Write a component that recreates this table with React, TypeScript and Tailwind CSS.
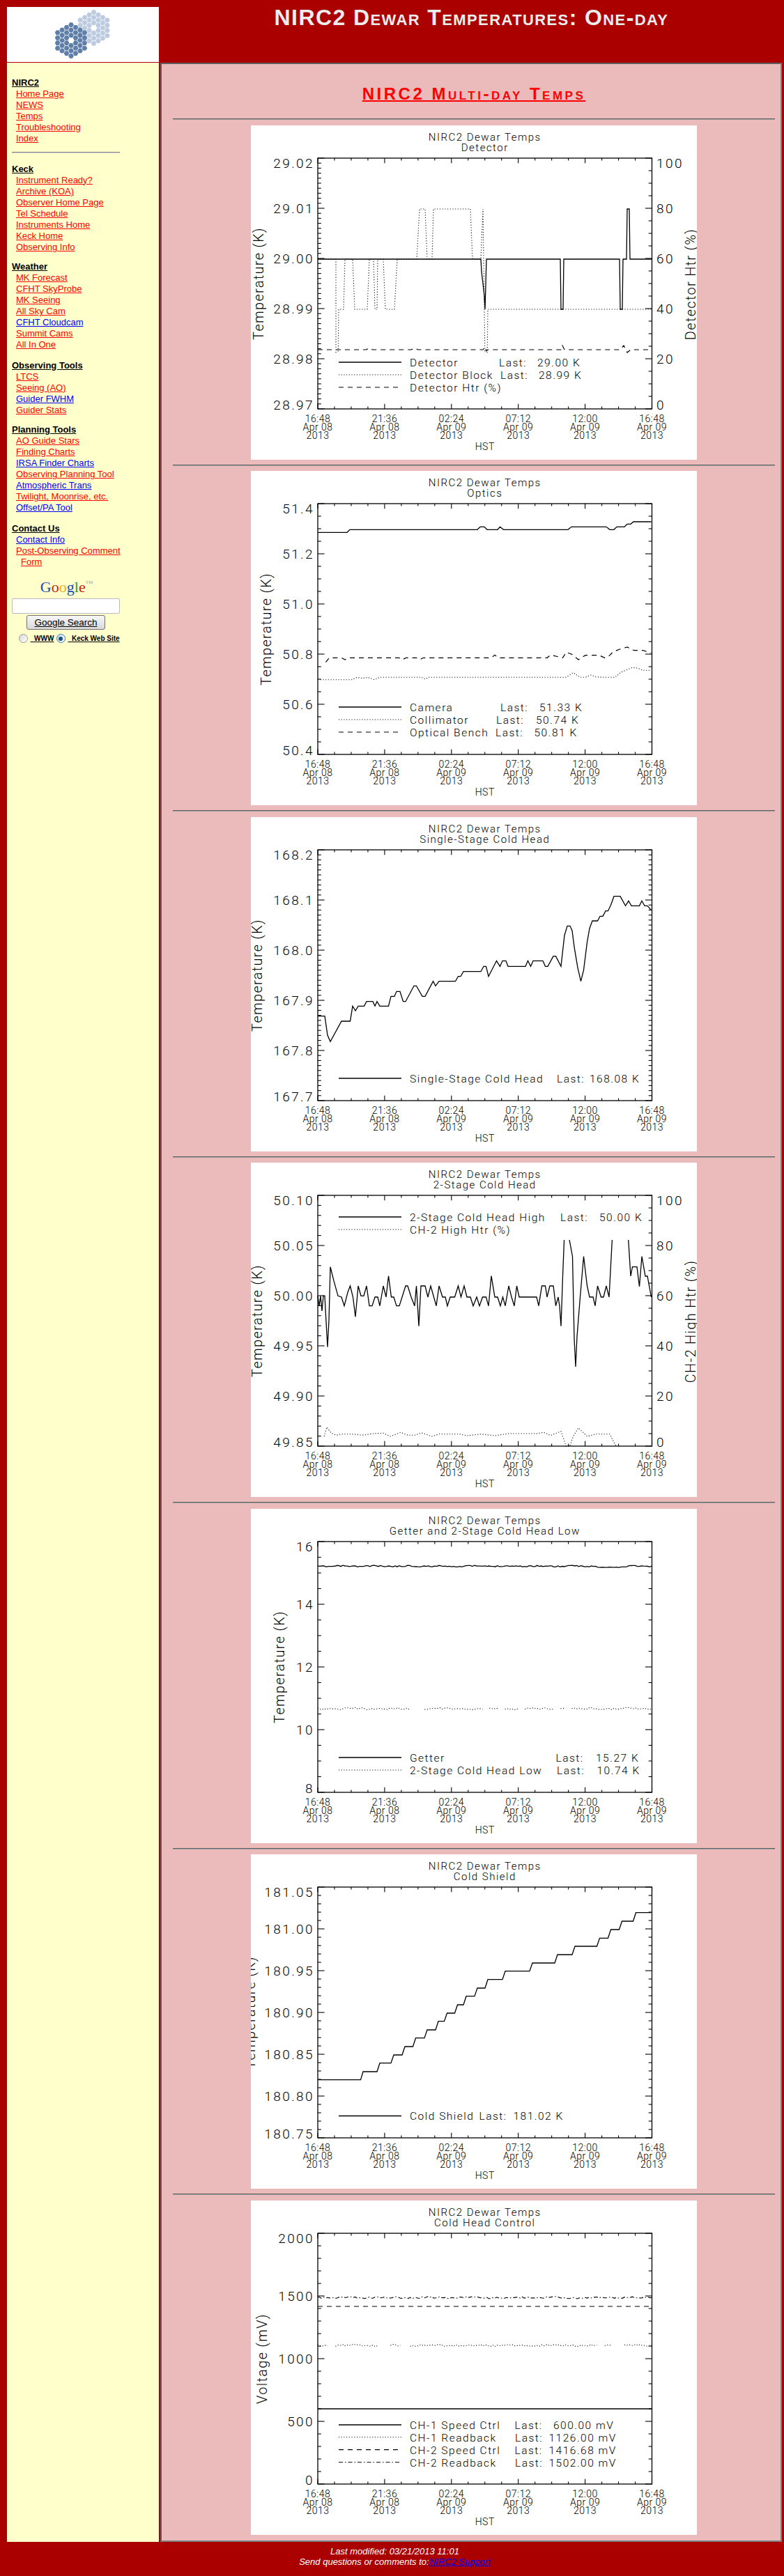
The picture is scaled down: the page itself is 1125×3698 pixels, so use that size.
import React from 'react';

type Pt = [number, number];
type LineStyle = 'solid' | 'dotted' | 'dashed' | 'dashdot';

const FONT = "Roboto, 'Liberation Sans', Arial, sans-serif";
const X0 = 96;
const X1 = 575.5;
const Y0 = 47;
const Y1 = 407;

const zx = (x: number) => (x - 232) / 2 + 96;
const zy = (y: number) => (y - 162) / 3 + 47;
const zy6 = (y: number) => (y - 160) / 3 + 47;
const Z = (arr: number[][], fy: (y: number) => number = zy): Pt[] =>
  arr.map(([x, y]) => [zx(x), fy(y)] as Pt);

function rng(seed: number) {
  let s = seed;
  return () => {
    s = (s * 16807) % 2147483647;
    return (s - 1) / 2147483646;
  };
}

function styleFor(s: LineStyle) {
  switch (s) {
    case 'dotted':
      return { strokeDasharray: '1.1 2.6', strokeWidth: 1.1 };
    case 'dashed':
      return { strokeDasharray: '7 6', strokeWidth: 1.2 };
    case 'dashdot':
      return { strokeDasharray: '6 3 1.5 3', strokeWidth: 1.1 };
    default:
      return { strokeDasharray: undefined, strokeWidth: 1.3 };
  }
}

interface LegendRow {
  style: LineStyle;
  label: string;
  lastX?: number;
  value?: string;
  valX?: number;
}

interface ChartDef {
  sub: string;
  yMin: number;
  step: number;
  nMaj: number;
  nMin: number;
  dec: number;
  yTitle: string;
  yTitleX: number;
  right?: string;
  series: { segs: Pt[][]; style: LineStyle }[];
  legend: LegendRow[];
  legendY: number[];
}

const xLabels = [
  ['16:48', 'Apr 08', '2013'],
  ['21:36', 'Apr 08', '2013'],
  ['02:24', 'Apr 09', '2013'],
  ['07:12', 'Apr 09', '2013'],
  ['12:00', 'Apr 09', '2013'],
  ['16:48', 'Apr 09', '2013'],
];

function pathOf(segs: Pt[][]) {
  return segs
    .map((seg) => 'M' + seg.map((p) => `${p[0].toFixed(1)},${p[1].toFixed(1)}`).join('L'))
    .join('');
}

function Chart({ d }: { d: ChartDef }) {
  const W = X1 - X0;
  const H = Y1 - Y0;
  const ticks: React.ReactNode[] = [];
  for (let i = 0; i <= 20; i++) {
    const x = X0 + (i * W) / 20;
    const len = i % 4 === 0 ? 7.2 : 3.6;
    ticks.push(<line key={'xb' + i} x1={x} x2={x} y1={Y1} y2={Y1 - len} />);
    ticks.push(<line key={'xt' + i} x1={x} x2={x} y1={Y0} y2={Y0 + len} />);
  }
  const nm = d.nMaj * d.nMin;
  for (let j = 0; j <= nm; j++) {
    const y = Y1 - (j * H) / nm;
    const len = j % d.nMin === 0 ? 9.6 : 4.8;
    ticks.push(<line key={'yl' + j} x1={X0} x2={X0 + len} y1={y} y2={y} />);
    if (!d.right) ticks.push(<line key={'yr' + j} x1={X1} x2={X1 - len} y1={y} y2={y} />);
  }
  if (d.right) {
    for (let j = 0; j <= 20; j++) {
      const y = Y1 - (j * H) / 20;
      const len = j % 4 === 0 ? 9.6 : 4.8;
      ticks.push(<line key={'rr' + j} x1={X1} x2={X1 - len} y1={y} y2={y} />);
    }
  }
  const texts: React.ReactNode[] = [];
  for (let i = 0; i <= d.nMaj; i++) {
    const y = Y1 - (i * H) / d.nMaj;
    const off = i === d.nMaj ? 7.5 : i === 0 ? -6 : 0;
    texts.push(
      <text key={'yv' + i} x={91} y={y + off + 6.8} fontSize={19} letterSpacing={2.4} textAnchor="end">
        {(d.yMin + i * d.step).toFixed(d.dec)}
      </text>
    );
  }
  if (d.right) {
    for (let i = 0; i <= 5; i++) {
      const y = Y1 - (i * H) / 5;
      const off = i === 5 ? 7.5 : i === 0 ? -6 : 0;
      texts.push(
        <text key={'rv' + i} x={582} y={y + off + 6.8} fontSize={19} letterSpacing={2.4}>
          {String(i * 20)}
        </text>
      );
    }
  }
  xLabels.forEach((lab, i) => {
    const x = X0 + (i * W) / 5;
    lab.forEach((t, k) => {
      texts.push(
        <text key={'xl' + i + '_' + k} x={x} y={426 + k * 12} fontSize={14} letterSpacing={0.5} textAnchor="middle">
          {t}
        </text>
      );
    });
  });
  const cx = (X0 + X1) / 2;
  const top = d.legendY[0] - 13;
  const bot = d.legendY[d.legendY.length - 1] + 15;
  return (
    <svg
      width={640}
      height={480}
      viewBox="0 0 640 480"
      className="block bg-white"
      fontFamily={FONT}
      fontWeight={300}
    >
      <rect x={0} y={0} width={640} height={480} fill="#ffffff" />
      {d.series.map((s, i) => {
        const st = styleFor(s.style);
        return (
          <path
            key={'s' + i}
            d={pathOf(s.segs)}
            fill="none"
            stroke="#000"
            strokeWidth={st.strokeWidth}
            strokeDasharray={st.strokeDasharray}
            strokeLinejoin="miter"
          />
        );
      })}
      <rect x={118} y={top} width={452} height={bot - top} fill="#ffffff" />
      <rect x={X0} y={Y0} width={W} height={H} fill="none" stroke="#000" strokeWidth={1.3} />
      <g stroke="#000" strokeWidth={1.1}>{ticks}</g>
      <g fill="#000">
        <text x={cx} y={22.4} fontSize={15} letterSpacing={1.5} textAnchor="middle">
          NIRC2 Dewar Temps
        </text>
        <text x={cx} y={37.4} fontSize={15} letterSpacing={1.5} textAnchor="middle">
          {d.sub}
        </text>
        {texts}
        <text x={cx} y={466} fontSize={14} letterSpacing={0.5} textAnchor="middle">
          HST
        </text>
        <text
          transform={`translate(${d.yTitleX},227) rotate(-90)`}
          fontSize={20}
          letterSpacing={1.3}
          textAnchor="middle"
        >
          {d.yTitle}
        </text>
        {d.right && (
          <text transform="translate(638,228) rotate(-90)" fontSize={20} letterSpacing={1.3} textAnchor="middle">
            {d.right}
          </text>
        )}
      </g>
      {d.legend.map((r, i) => {
        const y = d.legendY[i];
        const st = styleFor(r.style);
        return (
          <g key={'lg' + i}>
            <line
              x1={126}
              x2={216}
              y1={y}
              y2={y}
              stroke="#000"
              strokeWidth={st.strokeWidth}
              strokeDasharray={st.strokeDasharray}
            />
            <text x={228} y={y + 5.8} fontSize={15.5} letterSpacing={1.5}>
              {r.label}
            </text>
            {r.lastX !== undefined && (
              <text x={r.lastX} y={y + 5.8} fontSize={15.5} letterSpacing={1.5}>
                Last:
              </text>
            )}
            {r.valX !== undefined && (
              <text x={r.valX} y={y + 5.8} fontSize={15.5} letterSpacing={1.5}>
                {r.value}
              </text>
            )}
          </g>
        );
      })}
    </svg>
  );
}

/* ---------------- data ---------------- */

const c1Solid: Pt[] = [
  [96, 192], [330, 192], [331, 210], [333, 227], [335, 245], [336, 264], [338, 192],
  [444, 192], [445, 264], [448, 264], [449, 192], [529, 192], [530, 264], [533, 264],
  [534, 192], [539, 192], [540, 120], [543, 120], [544, 192], [575.5, 192],
];
const c1Dotted: Pt[] = [
  [96, 192], [122, 192], [122, 340], [125, 340], [126, 264], [133, 264], [135, 192],
  [146, 192], [149, 264], [167, 264], [170, 192], [176, 192], [178, 264], [181, 264],
  [182, 192], [190, 192], [193, 264], [206, 264], [210, 192], [238, 192], [242, 120],
  [250, 120], [253, 192], [260, 192], [262, 120], [315, 120], [318, 192], [330, 192],
  [333, 120], [335, 264], [336, 340], [339, 340], [340, 264], [575.5, 264],
];
const c1Dashed: Pt[] = [
  [96, 322], [165, 322], [170, 320], [175, 322], [230, 322], [235, 320], [240, 322],
  [333, 322], [336, 318], [338, 324], [340, 322], [445, 322], [447, 316], [450, 322],
  [530, 322], [535, 316], [540, 326], [545, 322], [575.5, 322],
];

const c2Camera = Z([
  [232, 286], [316, 286], [324, 274], [690, 274], [698, 262], [710, 262], [718, 274],
  [748, 274], [755, 262], [765, 274], [950, 274], [960, 262], [1060, 262], [1070, 274],
  [1082, 274], [1090, 262], [1112, 262], [1120, 250], [1130, 250], [1138, 240], [1189, 240],
]);
const c2Coll = Z([
  [232, 920], [330, 920], [345, 910], [360, 914], [375, 910], [395, 920], [410, 910],
  [530, 910], [540, 918], [550, 910], [945, 910], [965, 890], [985, 910], [1000, 910],
  [1015, 900], [1030, 908], [1050, 910], [1085, 910], [1100, 890], [1115, 880], [1135, 868],
  [1150, 870], [1165, 880], [1189, 880],
]);
const c2Bench = Z([
  [255, 845], [265, 826], [300, 826], [310, 834], [320, 826], [465, 826], [475, 834],
  [485, 826], [515, 826], [525, 834], [535, 826], [730, 826], [740, 814], [750, 826],
  [890, 826], [900, 814], [935, 826], [945, 802], [960, 810], [980, 834], [1000, 815],
  [1040, 815], [1055, 826], [1065, 822], [1080, 800], [1100, 788], [1120, 780], [1140, 794],
  [1165, 794], [1189, 805],
]);

const c3 = Z([
  [232, 878], [252, 878], [260, 960], [268, 988], [300, 900], [325, 900], [332, 835],
  [340, 855], [348, 835], [365, 835], [372, 815], [390, 815], [396, 835], [402, 815],
  [410, 835], [435, 835], [442, 793], [452, 793], [458, 772], [468, 772], [477, 815],
  [484, 815], [508, 748], [515, 748], [532, 793], [540, 793], [563, 728], [570, 748],
  [580, 728], [627, 728], [635, 707], [642, 707], [650, 686], [700, 686], [708, 664],
  [715, 664], [722, 707], [745, 640], [755, 664], [762, 640], [772, 640], [778, 664],
  [828, 664], [835, 640], [843, 664], [850, 640], [878, 640], [885, 664], [892, 664],
  [908, 620], [915, 620], [930, 664], [940, 530], [948, 490], [956, 490], [962, 510],
  [968, 580], [978, 670], [987, 728], [995, 680], [1005, 560], [1012, 500], [1020, 468],
  [1035, 468], [1042, 448], [1050, 448], [1058, 425], [1065, 425], [1073, 400], [1082, 362],
  [1100, 362], [1115, 403], [1124, 382], [1132, 403], [1155, 403], [1162, 382], [1170, 403],
  [1178, 403], [1189, 422],
]);

const c4Solid = Z([
  [232, 595], [236, 638], [240, 595], [244, 660], [248, 595], [252, 595], [255, 680],
  [260, 815], [264, 700], [268, 470], [278, 530], [290, 595], [300, 600], [308, 638],
  [318, 580], [325, 552], [333, 600], [340, 685], [348, 552], [356, 595], [364, 595],
  [372, 552], [380, 638], [388, 638], [396, 600], [404, 600], [410, 638], [420, 552],
  [428, 600], [435, 509], [443, 600], [450, 600], [458, 638], [466, 638], [474, 600],
  [484, 552], [490, 552], [500, 600], [510, 638], [515, 552], [522, 725], [528, 552],
  [540, 552], [548, 600], [556, 552], [565, 600], [572, 638], [580, 552], [590, 600],
  [598, 600], [604, 638], [612, 600], [625, 600], [635, 552], [643, 600], [652, 552],
  [660, 600], [670, 600], [678, 638], [688, 600], [696, 638], [705, 600], [715, 600],
  [722, 638], [730, 509], [740, 600], [748, 600], [756, 638], [763, 600], [770, 638],
  [780, 552], [788, 600], [796, 638], [803, 552], [810, 600], [860, 600], [866, 638],
  [875, 552], [885, 552], [890, 600], [898, 552], [908, 552], [915, 638], [922, 600],
  [926, 640], [930, 725], [935, 510], [940, 320], [950, 320], [963, 425], [968, 780],
  [972, 900], [976, 770], [985, 600], [995, 425], [1005, 552], [1012, 600], [1022, 600],
  [1028, 638], [1035, 552], [1045, 600], [1052, 600], [1060, 552], [1068, 600], [1078, 320],
  [1122, 320], [1130, 510], [1135, 470], [1148, 470], [1155, 555], [1162, 425], [1172, 510],
  [1178, 510], [1189, 600],
]);
const c4Dotted = Z([
  [250, 1200], [258, 1160], [270, 1185], [285, 1195], [300, 1190], [330, 1190], [360, 1195],
  [390, 1188], [420, 1186], [440, 1200], [470, 1183], [490, 1195], [510, 1195], [530, 1185],
  [560, 1200], [580, 1190], [640, 1190], [660, 1197], [700, 1190], [740, 1197], [780, 1188],
  [860, 1188], [880, 1183], [900, 1196], [930, 1178], [945, 1243], [955, 1243], [965, 1200],
  [980, 1163], [1005, 1200], [1030, 1190], [1070, 1190], [1085, 1235], [1090, 1243],
]);

function genGetter(): Pt[] {
  const r = rng(11);
  const out: Pt[] = [];
  for (let i = 0; i <= 160; i++) {
    const x = X0 + (i * (X1 - X0)) / 160;
    let y = zy(268) + Math.round((r() - 0.5) * 3) * 0.7 + Math.sin(i * 0.4) * 0.4;
    if (x > 495 && x < 532) y = zy(273) + (r() - 0.5);
    out.push([x, y]);
  }
  return out;
}

function genNoisy(seed: number, base: number, amp: number, n: number, gaps: number[][]): Pt[][] {
  const r = rng(seed);
  const segs: Pt[][] = [];
  let cur: Pt[] = [];
  for (let i = 0; i <= n; i++) {
    const x = X0 + (i * (X1 - X0)) / n;
    const inGap = gaps.some(([a, b]) => x > a && x < b);
    if (inGap) {
      if (cur.length > 1) segs.push(cur);
      cur = [];
      continue;
    }
    cur.push([x, base + (r() - 0.5) * 2 * amp + Math.sin(i * 0.3) * amp * 0.4]);
  }
  if (cur.length > 1) segs.push(cur);
  return segs;
}

const c5Low = genNoisy(5, zy(882), 1.4, 150, [
  [230, 247], [333, 342], [356, 363], [384, 392], [435, 442], [452, 458],
]);

const c6 = Z(
  [
    [232, 990], [355, 990], [362, 955], [402, 955], [410, 918], [442, 918], [450, 883],
    [474, 883], [482, 847], [505, 847], [513, 810], [538, 810], [546, 775], [570, 775],
    [578, 738], [595, 738], [603, 703], [625, 703], [633, 667], [650, 667], [658, 630],
    [682, 630], [690, 595], [712, 595], [720, 558], [762, 558], [770, 522], [840, 522],
    [848, 487], [912, 487], [920, 451], [962, 451], [970, 415], [1033, 415], [1041, 380],
    [1065, 380], [1073, 343], [1097, 343], [1105, 307], [1137, 307], [1145, 270], [1189, 270],
  ],
  zy6
);

const c7Speed1: Pt[] = [[X0, 407 - 600 * 0.18], [X1, 407 - 600 * 0.18]];
const c7Speed2: Pt[] = [[X0, 407 - 1416.68 * 0.18], [X1, 407 - 1416.68 * 0.18]];
const c7Read1 = genNoisy(21, zy(645), 1.2, 170, [
  [zx(262), zx(280)], [zx(410), zx(440)], [zx(470), zx(495)], [zx(1035), zx(1050)], [zx(1075), zx(1110)],
]);
const c7Read2 = genNoisy(33, zy(439), 1.2, 170, []);

const charts: ChartDef[] = [
  {
    sub: 'Detector', yMin: 28.97, step: 0.01, nMaj: 5, nMin: 10, dec: 2,
    yTitle: 'Temperature (K)', yTitleX: 17.5, right: 'Detector Htr (%)',
    series: [
      { segs: [c1Dashed], style: 'dashed' },
      { segs: [c1Dotted], style: 'dotted' },
      { segs: [c1Solid], style: 'solid' },
    ],
    legend: [
      { style: 'solid', label: 'Detector', lastX: 356, value: '29.00 K', valX: 411 },
      { style: 'dotted', label: 'Detector Block', lastX: 358, value: '28.99 K', valX: 413 },
      { style: 'dashed', label: 'Detector Htr (%)' },
    ],
    legendY: [340, 358, 376],
  },
  {
    sub: 'Optics', yMin: 50.4, step: 0.2, nMaj: 5, nMin: 4, dec: 1,
    yTitle: 'Temperature (K)', yTitleX: 29,
    series: [
      { segs: [c2Camera], style: 'solid' },
      { segs: [c2Coll], style: 'dotted' },
      { segs: [c2Bench], style: 'dashed' },
    ],
    legend: [
      { style: 'solid', label: 'Camera', lastX: 358, value: '51.33 K', valX: 414 },
      { style: 'dotted', label: 'Collimator', lastX: 352, value: '50.74 K', valX: 409 },
      { style: 'dashed', label: 'Optical Bench', lastX: 351, value: '50.81 K', valX: 406.5 },
    ],
    legendY: [339, 357, 375],
  },
  {
    sub: 'Single-Stage Cold Head', yMin: 167.7, step: 0.1, nMaj: 5, nMin: 10, dec: 1,
    yTitle: 'Temperature (K)', yTitleX: 15.5,
    series: [{ segs: [c3], style: 'solid' }],
    legend: [{ style: 'solid', label: 'Single-Stage Cold Head', lastX: 439, value: '168.08 K', valX: 486 }],
    legendY: [375],
  },
  {
    sub: '2-Stage Cold Head', yMin: 49.85, step: 0.05, nMaj: 5, nMin: 5, dec: 2,
    yTitle: 'Temperature (K)', yTitleX: 15.5, right: 'CH-2 High Htr (%)',
    series: [
      { segs: [c4Dotted], style: 'dotted' },
      { segs: [c4Solid], style: 'solid' },
    ],
    legend: [
      { style: 'solid', label: '2-Stage Cold Head High', lastX: 444, value: '50.00 K', valX: 500 },
      { style: 'dotted', label: 'CH-2 High Htr (%)' },
    ],
    legendY: [78, 96],
  },
  {
    sub: 'Getter and 2-Stage Cold Head Low', yMin: 8, step: 2, nMaj: 4, nMin: 4, dec: 0,
    yTitle: 'Temperature (K)', yTitleX: 48,
    series: [
      { segs: [genGetter()], style: 'solid' },
      { segs: c5Low, style: 'dotted' },
    ],
    legend: [
      { style: 'solid', label: 'Getter', lastX: 437.5, value: '15.27 K', valX: 495 },
      { style: 'dotted', label: '2-Stage Cold Head Low', lastX: 439, value: '10.74 K', valX: 496.5 },
    ],
    legendY: [357, 375],
  },
  {
    sub: 'Cold Shield', yMin: 180.75, step: 0.05, nMaj: 6, nMin: 5, dec: 2,
    yTitle: 'Temperature (K)', yTitleX: 6,
    series: [{ segs: [c6], style: 'solid' }],
    legend: [{ style: 'solid', label: 'Cold Shield', lastX: 327.5, value: '181.02 K', valX: 376.5 }],
    legendY: [375.5],
  },
  {
    sub: 'Cold Head Control', yMin: 0, step: 500, nMaj: 4, nMin: 5, dec: 0,
    yTitle: 'Voltage (mV)', yTitleX: 23,
    series: [
      { segs: [c7Speed1], style: 'solid' },
      { segs: c7Read1, style: 'dotted' },
      { segs: [c7Speed2], style: 'dashed' },
      { segs: c7Read2, style: 'dashdot' },
    ],
    legend: [
      { style: 'solid', label: 'CH-1 Speed Ctrl', lastX: 378.5, value: '600.00 mV', valX: 434 },
      { style: 'dotted', label: 'CH-1 Readback', lastX: 379, value: '1126.00 mV', valX: 427.5 },
      { style: 'dashed', label: 'CH-2 Speed Ctrl', lastX: 378.5, value: '1416.68 mV', valX: 427.5 },
      { style: 'dashdot', label: 'CH-2 Readback', lastX: 379, value: '1502.00 mV', valX: 427.5 },
    ],
    legendY: [322, 339.7, 357.7, 375.7],
  },
];

/* ---------------- logo ---------------- */

function HexCluster({ cx, cy, s, fill }: { cx: number; cy: number; s: number; fill: string }) {
  const cells: React.ReactNode[] = [];
  const sr = s * 0.9;
  for (let q = -3; q <= 3; q++) {
    for (let r = -3; r <= 3; r++) {
      const dist = Math.max(Math.abs(q), Math.abs(r), Math.abs(q + r));
      if (dist > 3 || dist === 0) continue;
      const x = cx + s * 1.5 * q;
      const y = cy + s * Math.sqrt(3) * (r + q / 2);
      const pts: string[] = [];
      for (let k = 0; k < 6; k++) {
        const a = (Math.PI / 3) * k;
        pts.push(`${(x + sr * Math.cos(a)).toFixed(2)},${(y + sr * Math.sin(a)).toFixed(2)}`);
      }
      cells.push(<polygon key={q + '_' + r} points={pts.join(' ')} fill={fill} />);
    }
  }
  return <g>{cells}</g>;
}

function Logo() {
  return (
    <svg width={218} height={79} viewBox="0 0 218 79" className="block">
      <HexCluster cx={124.5} cy={30} s={4.3} fill="#bccbe0" />
      <HexCluster cx={92} cy={48} s={4.3} fill="#5f7fa8" />
    </svg>
  );
}

/* ---------------- sidebar ---------------- */

function Head({ children }: { children: React.ReactNode }) {
  return <div className="leading-[16px] font-bold underline text-black">{children}</div>;
}

function Lk({ blue, children }: { blue?: boolean; children: React.ReactNode }) {
  return (
    <div className="leading-[16px] pl-[6px]">
      <a href="#" className={blue ? 'text-[#0000ff] underline' : 'text-[#ff0000] underline'}>
        {children}
      </a>
    </div>
  );
}

function Sidebar() {
  return (
    <div className="ml-[10px] w-[218px] shrink-0 bg-[#ffffcc] pl-[7px] pt-[20.7px] text-[13px]">
      <Head>NIRC2</Head>
      <Lk>Home Page</Lk>
      <Lk>NEWS</Lk>
      <Lk>Temps</Lk>
      <Lk>Troubleshooting</Lk>
      <Lk>Index</Lk>
      <div className="mt-[11.6px] mb-[14.4px] w-[155px] border-t border-b border-t-[#808080] border-b-[#d8d8d8]" />
      <Head>Keck</Head>
      <Lk>Instrument Ready?</Lk>
      <Lk>Archive (KOA)</Lk>
      <Lk>Observer Home Page</Lk>
      <Lk>Tel Schedule</Lk>
      <Lk>Instruments Home</Lk>
      <Lk>Keck Home</Lk>
      <Lk>Observing Info</Lk>
      <div className="mt-[12.6px]">
        <Head>Weather</Head>
        <Lk>MK Forecast</Lk>
        <Lk>CFHT SkyProbe</Lk>
        <Lk>MK Seeing</Lk>
        <Lk>All Sky Cam</Lk>
        <Lk blue>CFHT Cloudcam</Lk>
        <Lk>Summit Cams</Lk>
        <Lk>All In One</Lk>
      </div>
      <div className="mt-[13.4px]">
        <Head>Observing Tools</Head>
        <Lk>LTCS</Lk>
        <Lk>Seeing (AO)</Lk>
        <Lk blue>Guider FWHM</Lk>
        <Lk>Guider Stats</Lk>
      </div>
      <div className="mt-[12.6px]">
        <Head>Planning Tools</Head>
        <Lk>AO Guide Stars</Lk>
        <Lk>Finding Charts</Lk>
        <Lk blue>IRSA Finder Charts</Lk>
        <Lk>Observing Planning Tool</Lk>
        <Lk blue>Atmospheric Trans</Lk>
        <Lk>Twilight, Moonrise, etc.</Lk>
        <Lk blue>Offset/PA Tool</Lk>
      </div>
      <div className="mt-[13.4px]">
        <Head>Contact Us</Head>
        <Lk blue>Contact Info</Lk>
        <div className="leading-[16px] pl-[6px]">
          <a href="#" className="text-[#ff0000] underline">
            Post-Observing Comment
            <br />
            <span className="ml-[7px]">Form</span>
          </a>
        </div>
      </div>
      <div className="mt-[15px] w-[155px]">
        <div className="text-center font-['Liberation_Serif',serif] text-[22px] leading-[26px] pl-[2px]">
          <span className="text-[#1d4bb5]">G</span>
          <span className="text-[#c8241b]">o</span>
          <span className="text-[#e3b01c]">o</span>
          <span className="text-[#1d4bb5]">g</span>
          <span className="text-[#2f9a34]">l</span>
          <span className="text-[#c8241b]">e</span>
          <span className="align-top text-[7px] leading-[12px] text-[#9a9a9a]">TM</span>
        </div>
        <div className="mt-[3.4px] h-[22px] rounded-[2px] border border-[#b5bcc2] bg-white" />
        <div className="mt-[1.7px] flex justify-center">
          <div className="h-[21px] w-[113px] rounded-[3px] border border-[#707070] bg-linear-to-b from-[#f7f7f7] to-[#d9d9d9] text-center text-[13.5px] leading-[19px] text-black underline">
            Google Search
          </div>
        </div>
        <div className="mt-[6.5px] flex h-[13px] items-center text-[10px] font-bold text-black">
          <span className="ml-[10px] h-[13px] w-[13px] rounded-full border border-[#9a9a9a] bg-linear-to-br from-[#d8d8d8] to-[#ffffff]" />
          <span className="ml-[3.5px] underline leading-[13px]">{'\u00a0\u00a0WWW'}</span>
          <span className="ml-[3.5px] flex h-[13px] w-[13px] items-center justify-center rounded-full border border-[#3d7bad] bg-linear-to-br from-[#c9dcef] to-[#ffffff]">
            <span className="h-[6px] w-[6px] rounded-full bg-[#1b4f86]" />
          </span>
          <span className="ml-[3.5px] underline leading-[13px]">{'\u00a0\u00a0Keck Web Site'}</span>
        </div>
      </div>
    </div>
  );
}

/* ---------------- page ---------------- */

function Rule() {
  return <div className="border-t border-b border-t-[#5f5f5f] border-b-[#a0a0a0]" />;
}

export default function App() {
  return (
    <div className="min-h-[3698px] w-[1125px] bg-[#aa0000] font-['Liberation_Sans',Arial,sans-serif]">
      <div className="flex h-[90px]">
        <div className="ml-[10px] mt-[10px] h-[79px] w-[218px] shrink-0 bg-white">
          <Logo />
        </div>
        <div className="flex-1 pt-[7px] text-center text-[32px] font-bold leading-[37px] tracking-[1.4px] text-[#ededed] [font-variant:small-caps]">
          NIRC2 Dewar Temperatures: One-day
        </div>
      </div>
      <div className="flex">
        <Sidebar />
        <div className="ml-[2px] w-[892px] shrink-0 border-2 border-t-[#5e5e5e] border-l-[#5e5e5e] border-r-[#7e7e7e] border-b-[#7e7e7e] bg-[#ebbaba] pl-[16px] pr-[8px] pt-[29px] pb-[8px]">
          <div className="text-center text-[24px] leading-[28px] font-bold tracking-[3.5px] text-[#ff0000] underline decoration-2 [font-variant:small-caps]">
            NIRC2 Multi-day Temps
          </div>
          <div className="mt-[21.4px]">
            <Rule />
          </div>
          {charts.map((c, i) => (
            <div key={i}>
              {i > 0 && (
                <div className="mt-[7px]">
                  <Rule />
                </div>
              )}
              <div className="mx-auto mt-[7.5px] h-[480px] w-[640px]">
                <Chart d={c} />
              </div>
            </div>
          ))}
        </div>
      </div>
      <div className="pl-[8px] pt-[6px] text-center text-[13px] italic leading-[15px] text-white">
        <div>Last modified: 03/21/2013 11:01</div>
        <div>
          Send questions or comments to:
          <a href="#" className="text-[#0000ff] underline">
            NIRC2 Support
          </a>
        </div>
      </div>
    </div>
  );
}
